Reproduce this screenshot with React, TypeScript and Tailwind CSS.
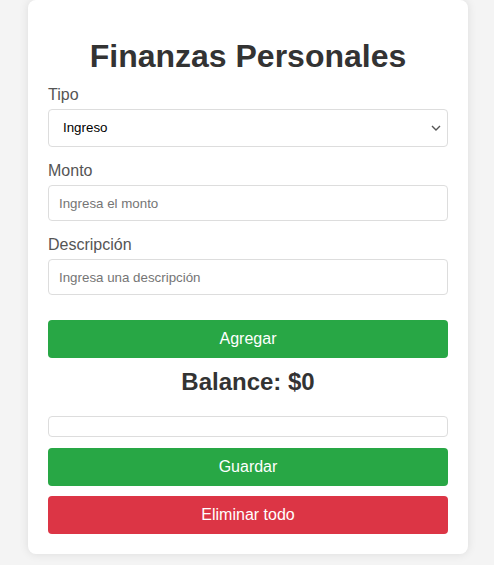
import React, { useState } from 'react';

export default function App() {
  const [tipo, setTipo] = useState('ingreso');
  const [monto, setMonto] = useState('');
  const [desc, setDesc] = useState('');

  const inputCls =
    'block w-full h-[36px] px-[10px] border border-[#ddd] rounded-[4px] text-[13.33px] text-black placeholder:text-[#757575] outline-none';

  return (
    <div className="min-h-[565px] bg-[#f4f4f4] font-['Liberation_Sans',Arial,sans-serif]">
      <div className="ml-[28px] w-[440px] bg-white rounded-[8px] shadow-[0_0_10px_rgba(0,0,0,0.1)] px-[20px] pt-[20px] pb-[20px]">
        <h1 className="mt-[18px] mb-[11px] h-[37px] leading-[37px] text-center text-[32px] font-bold text-[#333]">
          Finanzas Personales
        </h1>

        <label className="block h-[18px] leading-[18px] mb-[5px] text-[16px] text-[#555]">Tipo</label>
        <div className="relative">
          <select
            value={tipo}
            onChange={(e) => setTipo(e.target.value)}
            className="block w-full h-[38px] pl-[14px] pr-[30px] border border-[#ddd] rounded-[4px] text-[13.33px] text-black bg-white appearance-none outline-none"
          >
            <option value="ingreso">Ingreso</option>
            <option value="gasto">Gasto</option>
          </select>
          <svg
            className="absolute right-[7px] top-[16px] pointer-events-none"
            width="10"
            height="6"
            viewBox="0 0 10 6"
            fill="none"
          >
            <path d="M1 1l4 4 4-4" stroke="#555" strokeWidth="1.4" />
          </svg>
        </div>

        <label className="block mt-[15px] h-[18px] leading-[18px] mb-[5px] text-[16px] text-[#555]">Monto</label>
        <input
          type="number"
          value={monto}
          onChange={(e) => setMonto(e.target.value)}
          placeholder="Ingresa el monto"
          className={inputCls}
        />

        <label className="block mt-[15px] h-[18px] leading-[18px] mb-[5px] text-[16px] text-[#555]">Descripción</label>
        <input
          type="text"
          value={desc}
          onChange={(e) => setDesc(e.target.value)}
          placeholder="Ingresa una descripción"
          className={inputCls}
        />

        <button className="block w-full mt-[25px] h-[38px] rounded-[4px] bg-[#28a745] text-white text-[16px]">
          Agregar
        </button>

        <h2 className="mt-[10px] h-[28px] leading-[28px] text-center text-[24px] font-bold text-[#333]">
          Balance: $0
        </h2>

        <ul className="mt-[20px] h-[21px] border border-[#ddd] rounded-[4px]"></ul>

        <button className="block w-full mt-[11px] h-[38px] rounded-[4px] bg-[#28a745] text-white text-[16px]">
          Guardar
        </button>
        <button className="block w-full mt-[10px] h-[38px] rounded-[4px] bg-[#dc3545] text-white text-[16px]">
          Eliminar todo
        </button>
      </div>
    </div>
  );
}
